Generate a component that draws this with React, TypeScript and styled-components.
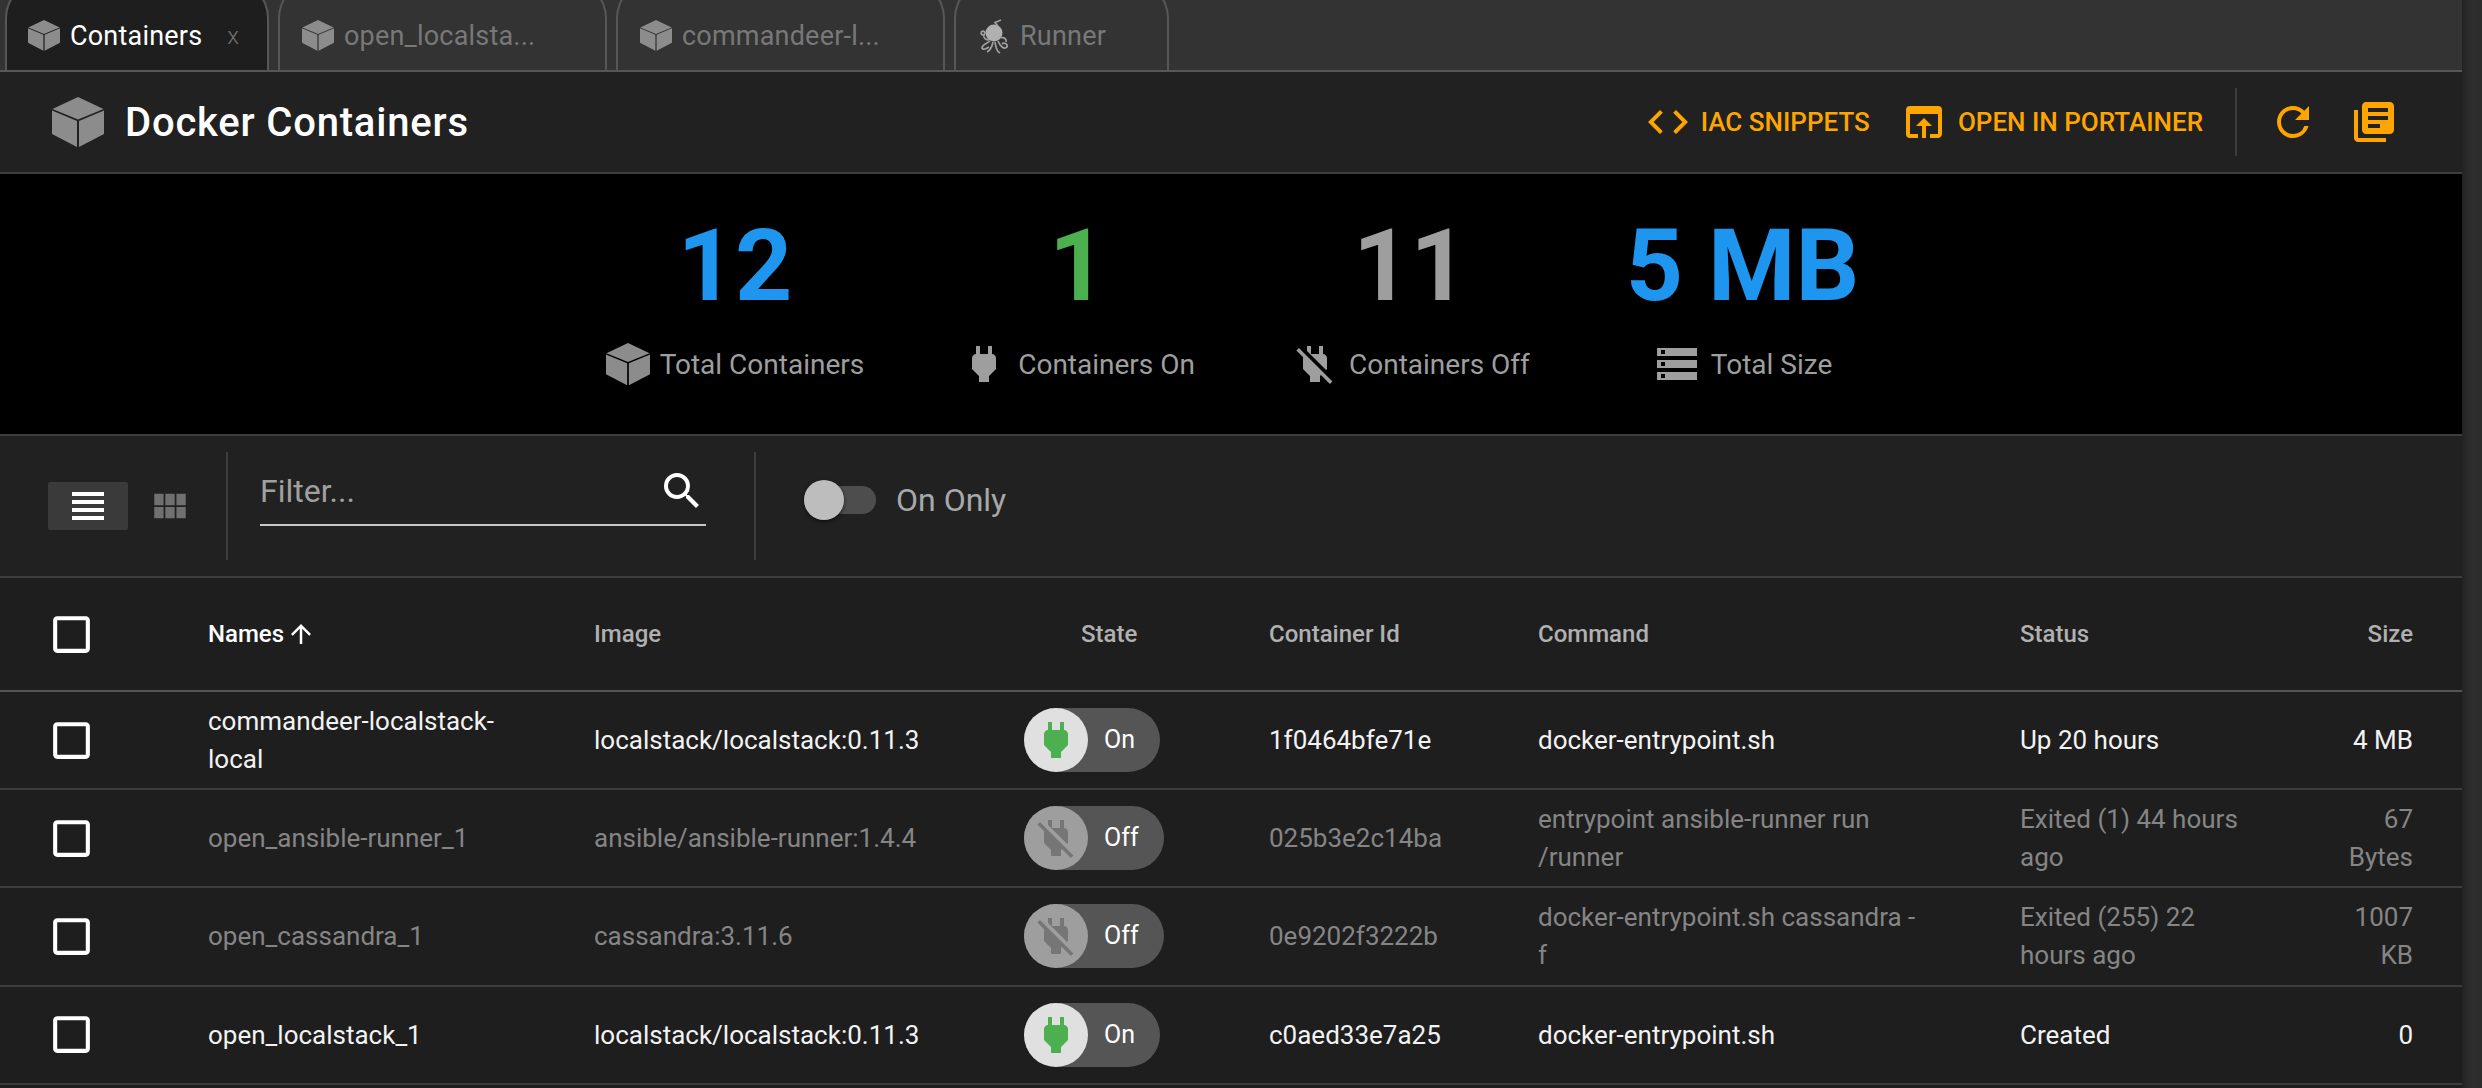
import React from "react";
import styled, { createGlobalStyle } from "styled-components";
import {
  MdCode, MdOpenInBrowser, MdRefresh, MdLibraryBooks, MdPower, MdPowerOff, MdStorage,
  MdViewHeadline, MdViewModule, MdSearch, MdArrowUpward, MdCheckBoxOutlineBlank,
} from "react-icons/md";

const Global = createGlobalStyle`
  html, body { margin: 0; padding: 0; background: #1e1e1e; overflow: hidden; }
  body { font-family: Roboto, "Liberation Sans", sans-serif; }
  #root { height: 1088px; }
`;

const COLUMNS = "208px 386px 430px 245px 269px 482px 322px 120px";

const Shell = styled.div`display: flex; width: 2482px; height: 1088px; overflow: hidden;`;
const Main = styled.div`flex: 1; min-width: 0; display: flex; flex-direction: column;`;
const Scrollbar = styled.div`width: 20px; background: linear-gradient(90deg, #232323, #2e2e2e 40%, #2b2b2b);`;

const TabBar = styled.div`
  height: 70px; box-sizing: content-box; background: #333; border-bottom: 2px solid #575757;
  display: flex; align-items: flex-end; gap: 9px; padding-left: 5px; overflow: hidden;
`;
const Tab = styled.div<{ $active?: boolean; $w: number; $pad: number }>`
  width: ${p => p.$w}px; height: 90px; box-sizing: border-box; flex: none;
  border: 2px solid #575757; border-bottom: none; border-radius: 38px 38px 0 0;
  background: ${p => (p.$active ? "#1e1e1e" : "#333")};
  color: ${p => (p.$active ? "#fff" : "#787878")};
  display: flex; align-items: center; padding: 19px 0 0 ${p => p.$pad}px; gap: 10px;
  font-size: 27px; letter-spacing: 0.2px; white-space: nowrap;
`;
const TabClose = styled.span`font-size: 24px; font-weight: 300; color: #707070; margin-left: 15px;`;

const CubeSvg = styled.svg<{ $w: number }>`width: ${p => p.$w}px; flex: none; display: block;`;
const Cube = ({ w, color = "#8c8c8c" }: { w: number; color?: string }) => (
  <CubeSvg $w={w} viewBox="0 0 52 50">
    <path fill={color} d="M26 0 51.5 12 26 22.6 .5 12Z" />
    <path fill={color} d="M0 13.5 25 24V50L0 37Z" />
    <path fill={color} d="M52 13.5 27 24V50L52 37Z" />
  </CubeSvg>
);
const OctoSvg = styled.svg`width: 30px; height: 38px; flex: none; display: block;`;
const Octopus = () => (
  <OctoSvg viewBox="0 0 30 38">
    <circle cx="14" cy="16" r="8.5" fill="#b0b0b0" />
    <g fill="none" stroke="#a0a0a0" strokeWidth="1.7">
      <path d="M18 9 15 5.5 21 3" />
      <circle cx="3" cy="16" r="1.8" />
      <path d="M4 18C3 21 6 23 9 23" />
      <path d="M10 24C7 27 2 27 2 31 3 33 6 32 9 30" />
      <path d="M13 25C12 30 11 33 7 35" />
      <path d="M15 25C16 30 16 34 20 36" />
      <path d="M18 24C20 29 24 33 27 30 28 27 24 25 22 27" />
      <path d="M21 21C24 20 27 22 26 25" />
    </g>
  </OctoSvg>
);

const Header = styled.header`
  height: 100px; box-sizing: content-box; background: #212121; border-bottom: 2px solid #3d3d3d;
  display: flex; align-items: center; padding: 0 64px 0 52px;
`;
const Title = styled.h1`
  margin: 0 0 0 21px; flex: 1; font-size: 40px; font-weight: 500; color: #fff; letter-spacing: 0.8px;
`;
const ActionButton = styled.div<{ $gap: number; $ml?: number }>`
  display: flex; align-items: center; gap: ${p => p.$gap}px; margin-left: ${p => p.$ml ?? 0}px;
  color: #ffa500; font-size: 26px; font-weight: 500;
`;
const VLine = styled.div<{ $h: number; $ml: number; $mr: number }>`
  width: 2px; height: ${p => p.$h}px; background: #3d3d3d; margin: 0 ${p => p.$mr}px 0 ${p => p.$ml}px; flex: none;
`;
const LibraryIcon = styled(MdLibraryBooks)`margin-left: 33px; flex: none;`;
const ModuleIcon = styled(MdViewModule)`margin: 0 35px 0 21px; flex: none;`;

const Stats = styled.section`
  background: #000; border-bottom: 2px solid #3d3d3d;
  display: flex; justify-content: center; gap: 96px; padding: 42px 0 0 3px; box-sizing: border-box; height: 262px;
`;
const Stat = styled.div`display: flex; flex-direction: column; align-items: center;`;
const StatNumber = styled.div<{ $color: string }>`
  font-size: 100px; line-height: 100px; font-weight: 700; color: ${p => p.$color};
`;
const StatLabel = styled.div`
  margin-top: 24px; height: 48px; display: flex; align-items: center; gap: 10px;
  color: #9e9e9e; font-size: 28px; white-space: nowrap;
`;
const StatIcon = styled.div`width: 48px; height: 48px; display: flex; align-items: center; justify-content: center; color: #9e9e9e;`;

const Toolbar = styled.div`
  height: 140px; box-sizing: content-box; background: #212121; border-bottom: 2px solid #3d3d3d;
  display: flex; align-items: center; padding-left: 48px;
`;
const ViewButton = styled.div<{ $active?: boolean }>`
  width: 80px; height: 48px; display: flex; align-items: center; justify-content: center;
  background: ${p => (p.$active ? "#3a3a3a" : "transparent")};
  border-radius: 2px; color: ${p => (p.$active ? "#fff" : "#707070")};
`;
const FilterBox = styled.div`
  width: 446px; height: 72px; box-sizing: border-box; border-bottom: 2px solid #c8c8c8;
  margin-top: -32px; display: flex; align-items: center; justify-content: space-between;
  color: #a0a0a0; font-size: 32px; padding-top: 4px;
`;
const SwitchTrack = styled.div`
  position: relative; width: 72px; height: 28px; border-radius: 14px; background: #4d4d4d; flex: none; margin-bottom: 12px;
`;
const SwitchKnob = styled.div`
  position: absolute; left: 0; top: -6px; width: 40px; height: 40px; border-radius: 50%;
  background: #bdbdbd; box-shadow: 0 2px 4px rgba(0,0,0,.5);
`;
const SwitchLabel = styled.span`margin: 0 0 12px 20px; color: #a8a8a8; font-size: 32px;`;

const TableBody = styled.div`flex: 1; background: #1e1e1e;`;
const Row = styled.div<{ $head?: boolean }>`
  display: grid; grid-template-columns: ${COLUMNS}; align-items: center;
  box-sizing: border-box; height: ${p => (p.$head ? "114px" : "98.2px")};
  border-bottom: 2px solid ${p => (p.$head ? "#555" : "#3d3d3d")};
  font-size: 26px; line-height: 38px;
`;
const CheckCell = styled.div`padding-left: 47px; display: flex; color: #fff;`;
const HeadCell = styled.div<{ $active?: boolean; $right?: boolean; $pl?: number }>`
  color: ${p => (p.$active ? "#fff" : "#b0b0b0")}; font-weight: 500; font-size: 24px;
  display: flex; align-items: center; gap: 2px;
  justify-content: ${p => (p.$right ? "flex-end" : "flex-start")};
  padding-left: ${p => p.$pl ?? 0}px; padding-right: ${p => (p.$right ? 49 : 0)}px;
`;
const Cell = styled.div<{ $on: boolean; $pr?: number; $right?: boolean }>`
  color: ${p => (p.$on ? "#f2f2f2" : "#858585")};
  padding-right: ${p => p.$pr ?? 0}px; text-align: ${p => (p.$right ? "right" : "left")};
`;
const Pill = styled.div<{ $on: boolean }>`
  display: inline-flex; align-items: center; height: 64px; border-radius: 32px; background: #555;
  width: ${p => (p.$on ? 136 : 140)}px; color: #fff; font-size: 25px; vertical-align: middle;
`;
const PillKnob = styled.div<{ $on: boolean }>`
  width: 64px; height: 64px; border-radius: 50%; flex: none; display: flex; align-items: center; justify-content: center;
  background: ${p => (p.$on ? "#e0e0e0" : "#9e9e9e")}; color: ${p => (p.$on ? "#4caf50" : "#767676")};
  margin-right: 16px;
`;

const tabs = [
  { label: "Containers", w: 264, pad: 21, active: true },
  { label: "open_localsta...", w: 329, pad: 22 },
  { label: "commandeer-l...", w: 329, pad: 22 },
  { label: "Runner", w: 215, pad: 24, octo: true },
];
const rows = [
  { on: true, name: "commandeer-localstack-local", image: "localstack/localstack:0.11.3", id: "1f0464bfe71e", cmd: "docker-entrypoint.sh", status: "Up 20 hours", size: "4 MB" },
  { on: false, name: "open_ansible-runner_1", image: "ansible/ansible-runner:1.4.4", id: "025b3e2c14ba", cmd: "entrypoint ansible-runner run /runner", status: "Exited (1) 44 hours ago", size: "67 Bytes" },
  { on: false, name: "open_cassandra_1", image: "cassandra:3.11.6", id: "0e9202f3222b", cmd: "docker-entrypoint.sh cassandra -f", status: "Exited (255) 22 hours ago", size: "1007 KB" },
  { on: true, name: "open_localstack_1", image: "localstack/localstack:0.11.3", id: "c0aed33e7a25", cmd: "docker-entrypoint.sh", status: "Created", size: "0" },
];

export default function App() {
  return (
    <Shell>
      <Global />
      <Main>
        <TabBar>
          {tabs.map(t => (
            <Tab key={t.label} $active={t.active} $w={t.w} $pad={t.pad}>
              {t.octo ? <Octopus /> : <Cube w={32} />}
              {t.label}
              {t.active && <TabClose>x</TabClose>}
            </Tab>
          ))}
        </TabBar>
        <Header>
          <Cube w={52} />
          <Title>Docker Containers</Title>
          <ActionButton $gap={9}><MdCode size={48} />IAC SNIPPETS</ActionButton>
          <ActionButton $gap={10} $ml={30}><MdOpenInBrowser size={48} />OPEN IN PORTAINER</ActionButton>
          <VLine $h={68} $ml={32} $mr={32} />
          <MdRefresh size={48} color="#ffa500" />
          <LibraryIcon size={48} color="#ffa500" />
        </Header>
        <Stats>
          <Stat>
            <StatNumber $color="#1e96f0">12</StatNumber>
            <StatLabel><Cube w={44} />Total Containers</StatLabel>
          </Stat>
          <Stat>
            <StatNumber $color="#4caf50">1</StatNumber>
            <StatLabel><StatIcon><MdPower size={48} /></StatIcon>Containers On</StatLabel>
          </Stat>
          <Stat>
            <StatNumber $color="#9e9e9e">11</StatNumber>
            <StatLabel><StatIcon><MdPowerOff size={48} /></StatIcon>Containers Off</StatLabel>
          </Stat>
          <Stat>
            <StatNumber $color="#1e96f0">5 MB</StatNumber>
            <StatLabel><StatIcon><MdStorage size={48} /></StatIcon>Total Size</StatLabel>
          </Stat>
        </Stats>
        <Toolbar>
          <ViewButton $active><MdViewHeadline size={48} /></ViewButton>
          <ModuleIcon size={42} color="#707070" />
          <VLine $h={108} $ml={0} $mr={32} />
          <FilterBox>Filter...<MdSearch size={48} color="#fff" /></FilterBox>
          <VLine $h={108} $ml={48} $mr={48} />
          <SwitchTrack><SwitchKnob /></SwitchTrack>
          <SwitchLabel>On Only</SwitchLabel>
        </Toolbar>
        <TableBody>
          <Row $head>
            <CheckCell><MdCheckBoxOutlineBlank size={49} /></CheckCell>
            <HeadCell $active>Names<MdArrowUpward size={30} /></HeadCell>
            <HeadCell>Image</HeadCell>
            <HeadCell $pl={57}>State</HeadCell>
            <HeadCell>Container Id</HeadCell>
            <HeadCell>Command</HeadCell>
            <HeadCell>Status</HeadCell>
            <HeadCell $right>Size</HeadCell>
          </Row>
          {rows.map(r => (
            <Row key={r.id}>
              <CheckCell><MdCheckBoxOutlineBlank size={49} /></CheckCell>
              <Cell $on={r.on} $pr={60}>{r.name}</Cell>
              <Cell $on={r.on}>{r.image}</Cell>
              <div>
                <Pill $on={r.on}>
                  <PillKnob $on={r.on}>{r.on ? <MdPower size={48} /> : <MdPowerOff size={48} />}</PillKnob>
                  {r.on ? "On" : "Off"}
                </Pill>
              </div>
              <Cell $on={r.on}>{r.id}</Cell>
              <Cell $on={r.on} $pr={102}>{r.cmd}</Cell>
              <Cell $on={r.on} $pr={87}>{r.status}</Cell>
              <Cell $on={r.on} $pr={49} $right>{r.size}</Cell>
            </Row>
          ))}
        </TableBody>
      </Main>
      <Scrollbar />
    </Shell>
  );
}
